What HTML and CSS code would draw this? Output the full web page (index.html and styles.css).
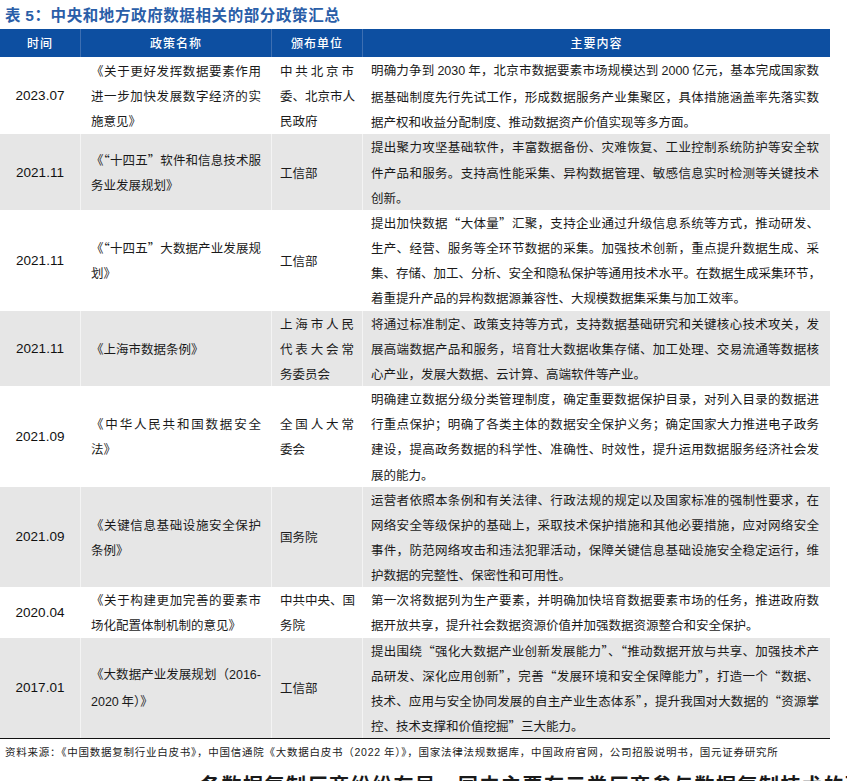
FILE: index.html
```html
<!DOCTYPE html>
<html lang="zh-CN">
<head>
<meta charset="utf-8">
<title>表5</title>
<link rel="stylesheet" href="styles.css">
</head>
<body>
<div class="page">
  <div class="title">表 <span class="tn">5</span>：中央和地方政府数据相关的部分政策汇总</div>
  <div class="table">
    <div class="row head">
      <div class="c">时间</div>
      <div class="c">政策名称</div>
      <div class="c">颁布单位</div>
      <div class="c">主要内容</div>
    </div>

    <div class="row">
      <div class="c date">2023.07</div>
      <div class="c name"><span class="l">《关于更好发挥数据要素作用</span><span class="l">进一步加快发展数字经济的实</span><span class="l">施意见》</span></div>
      <div class="c org"><span class="l">中共北京市</span><span class="l">委、北京市人</span><span class="l">民政府</span></div>
      <div class="c text"><span class="l">明确力争到 <span class="n">2030</span> 年，北京市数据要素市场规模达到 <span class="n">2000</span> 亿元，基本完成国家数</span><span class="l">据基础制度先行先试工作，形成数据服务产业集聚区，具体措施涵盖率先落实数</span><span class="l">据产权和收益分配制度、推动数据资产价值实现等多方面。</span></div>
    </div>

    <div class="row alt">
      <div class="c date">2021.11</div>
      <div class="c name"><span class="l">《“十四五”软件和信息技术服</span><span class="l">务业发展规划》</span></div>
      <div class="c org"><span class="l">工信部</span></div>
      <div class="c text"><span class="l">提出聚力攻坚基础软件，丰富数据备份、灾难恢复、工业控制系统防护等安全软</span><span class="l">件产品和服务。支持高性能采集、异构数据管理、敏感信息实时检测等关键技术</span><span class="l">创新。</span></div>
    </div>

    <div class="row">
      <div class="c date">2021.11</div>
      <div class="c name"><span class="l">《“十四五”大数据产业发展规</span><span class="l">划》</span></div>
      <div class="c org"><span class="l">工信部</span></div>
      <div class="c text"><span class="l">提出加快数据“大体量”汇聚，支持企业通过升级信息系统等方式，推动研发、</span><span class="l">生产、经营、服务等全环节数据的采集。加强技术创新，重点提升数据生成、采</span><span class="l">集、存储、加工、分析、安全和隐私保护等通用技术水平。在数据生成采集环节，</span><span class="l">着重提升产品的异构数据源兼容性、大规模数据集采集与加工效率。</span></div>
    </div>

    <div class="row alt">
      <div class="c date">2021.11</div>
      <div class="c name"><span class="l">《上海市数据条例》</span></div>
      <div class="c org"><span class="l">上海市人民</span><span class="l">代表大会常</span><span class="l">务委员会</span></div>
      <div class="c text"><span class="l">将通过标准制定、政策支持等方式，支持数据基础研究和关键核心技术攻关，发</span><span class="l">展高端数据产品和服务，培育壮大数据收集存储、加工处理、交易流通等数据核</span><span class="l">心产业，发展大数据、云计算、高端软件等产业。</span></div>
    </div>

    <div class="row">
      <div class="c date">2021.09</div>
      <div class="c name"><span class="l">《中华人民共和国数据安全</span><span class="l">法》</span></div>
      <div class="c org"><span class="l">全国人大常</span><span class="l">委会</span></div>
      <div class="c text"><span class="l">明确建立数据分级分类管理制度，确定重要数据保护目录，对列入目录的数据进</span><span class="l">行重点保护；明确了各类主体的数据安全保护义务；确定国家大力推进电子政务</span><span class="l">建设，提高政务数据的科学性、准确性、时效性，提升运用数据服务经济社会发</span><span class="l">展的能力。</span></div>
    </div>

    <div class="row alt">
      <div class="c date">2021.09</div>
      <div class="c name"><span class="l">《关键信息基础设施安全保护</span><span class="l">条例》</span></div>
      <div class="c org"><span class="l">国务院</span></div>
      <div class="c text"><span class="l">运营者依照本条例和有关法律、行政法规的规定以及国家标准的强制性要求，在</span><span class="l">网络安全等级保护的基础上，采取技术保护措施和其他必要措施，应对网络安全</span><span class="l">事件，防范网络攻击和违法犯罪活动，保障关键信息基础设施安全稳定运行，维</span><span class="l">护数据的完整性、保密性和可用性。</span></div>
    </div>

    <div class="row">
      <div class="c date">2020.04</div>
      <div class="c name"><span class="l">《关于构建更加完善的要素市</span><span class="l">场化配置体制机制的意见》</span></div>
      <div class="c org"><span class="l">中共中央、国</span><span class="l">务院</span></div>
      <div class="c text"><span class="l">第一次将数据列为生产要素，并明确加快培育数据要素市场的任务，推进政府数</span><span class="l">据开放共享，提升社会数据资源价值并加强数据资源整合和安全保护。</span></div>
    </div>

    <div class="row alt last">
      <div class="c date">2017.01</div>
      <div class="c name"><span class="l">《大数据产业发展规划（<span class="n">2016-</span></span><span class="l"><span class="n">2020</span> 年）》</span></div>
      <div class="c org"><span class="l">工信部</span></div>
      <div class="c text"><span class="l">提出围绕“强化大数据产业创新发展能力”、“推动数据开放与共享、加强技术产</span><span class="l">品研发、深化应用创新”，完善“发展环境和安全保障能力”，打造一个“数据、</span><span class="l">技术、应用与安全协同发展的自主产业生态体系”，提升我国对大数据的“资源掌</span><span class="l">控、技术支撑和价值挖掘”三大能力。</span></div>
    </div>
  </div>
  <div class="source">资料来源：《中国数据复制行业白皮书》，中国信通院《大数据白皮书（<span class="n">2022</span> 年）》，国家法律法规数据库，中国政府官网，公司招股说明书，国元证券研究所</div>
  <div class="next">各数据复制厂商纷纷布局，国内主要有三类厂商参与数据复制技术的研</div>
</div>
</body>
</html>
```
FILE: styles.css
```css
html, body {
  margin: 0;
  padding: 0;
  background: #ffffff;
}

body {
  width: 847px;
  height: 781px;
  overflow: hidden;
  font-family: "Noto Sans CJK SC", "Liberation Sans", sans-serif;
  color: #1a1a1a;
}

.page {
  display: flex;
  flex-direction: column;
}

.title {
  height: 29px;
  line-height: 29px;
  padding-left: 5px;
  font-size: 15.5px;
  font-weight: 700;
  color: #2a5ea8;
  letter-spacing: 0.6px;
}

.title .tn {
  font-family: "Liberation Sans", sans-serif;
  font-weight: 700;
}

.table {
  width: 830px;
  display: flex;
  flex-direction: column;
}

.row {
  display: grid;
  grid-template-columns: 80px 191px 91px 468px;
  background: #ffffff;
}

.row.alt {
  background: #e6e6e6;
}

.row.last {
  border-bottom: 1.5px solid #111111;
}

.row.head {
  background: #0d4fa1;
  height: 28px;
}

.row.head .c {
  color: #ffffff;
  font-size: 12px;
  font-weight: 500;
  text-align: center;
  line-height: 28px;
  letter-spacing: 1px;
  border-left: 1px solid #3d6fb2;
}

.row.head .c:first-child {
  border-left: none;
}

.c {
  font-size: 12.5px;
  line-height: 25.15px;
  border-left: 1px solid rgba(255, 255, 255, 0.55);
  box-sizing: border-box;
}

.row .c:first-child {
  border-left: none;
}

.c .l {
  display: block;
  white-space: nowrap;
  text-align: justify;
  text-align-last: justify;
}

.c .l:last-child {
  text-align-last: auto;
}

.n {
  font-family: "Liberation Sans", sans-serif;
}

.date {
  display: flex;
  align-items: center;
  justify-content: center;
  font-family: "Liberation Sans", sans-serif;
  font-size: 13.5px;
  color: #111111;
}

.name {
  padding: 0 10px 0 10px;
  display: flex;
  flex-direction: column;
  justify-content: center;
}

.org {
  padding: 0 8px 0 8px;
  display: flex;
  flex-direction: column;
  justify-content: center;
}

.text {
  padding: 0 11px 0 8px;
}

.source {
  padding-left: 5px;
  height: 25px;
  line-height: 25px;
  font-size: 10.5px;
  color: #222222;
  letter-spacing: 0.75px;
  white-space: nowrap;
}

.next {
  margin-top: 8px;
  padding-left: 200px;
  font-size: 20px;
  font-weight: 700;
  line-height: 26px;
  color: #1a1a1a;
  letter-spacing: 1.5px;
  white-space: nowrap;
}
```
